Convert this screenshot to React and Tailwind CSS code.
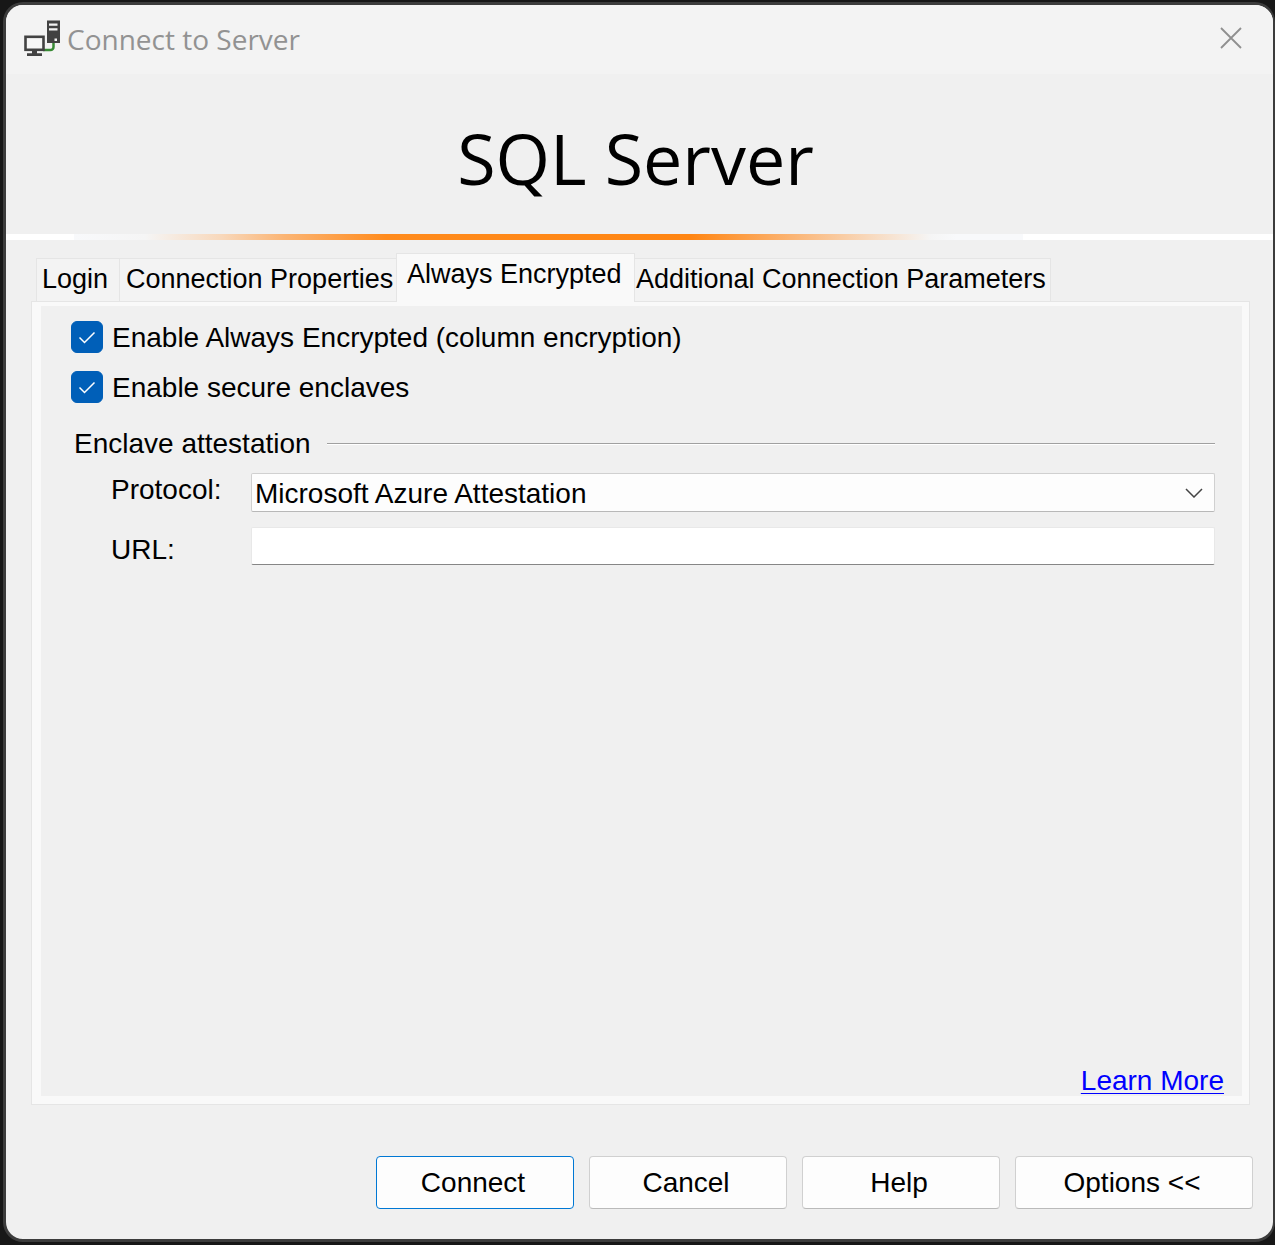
import { useState } from "react";

const TABS = [
  { name: "Login", className: "w-[84px] pl-[5px]" },
  { name: "Connection Properties", className: "w-[278px] pl-[6px]" },
  { name: "Always Encrypted", className: "w-[239px] pl-[10px]" },
  { name: "Additional Connection Parameters", className: "w-[417px] pl-[1px]" },
];

function ServerIcon() {
  return (
    <svg width="38" height="38" viewBox="0 0 38 38" fill="none" aria-hidden="true">
      <path d="M20 31h7.500a3 3 0 0 0 3-3v-5" stroke="#388a34" strokeWidth="2.500" />
      <rect x="24" y="1.500" width="13" height="22.500" fill="#424242" />
      <path d="M26 4.500h8.500v2.200H26zM26 9.300h8.500v2.200H26zM31.500 19.500h2.500v2.500h-2.500z" fill="#f3f3f3" />
      <rect x="2.500" y="17.800" width="18" height="13" stroke="#424242" strokeWidth="2.600" fill="#f6f6f6" />
      <path d="M9 31h5v3.300h5v2.700H4v-2.700h5z" fill="#424242" />
    </svg>
  );
}

function CheckOption({ id, label }) {
  return (
    <div className="flex h-8 items-center gap-[9px]">
      <span className="grid size-8 shrink-0">
        <input
          id={id}
          type="checkbox"
          defaultChecked
          className="peer col-start-1 row-start-1 size-8 appearance-none rounded-md border border-gray-500 bg-white checked:border-[#005fb8] checked:bg-[#005fb8]"
        />
        <svg
          viewBox="0 0 32 32"
          fill="none"
          aria-hidden="true"
          className="pointer-events-none invisible col-start-1 row-start-1 size-8 peer-checked:visible"
        >
          <path d="M8.500 16.500l5 5L23.500 11.500" stroke="#fff" strokeWidth="1.500" />
        </svg>
      </span>
      <label htmlFor={id} className="pt-[2px]">{label}</label>
    </div>
  );
}

function DialogButton({ children, className }) {
  return (
    <button type="button" className={`h-[53px] rounded border bg-[#fdfdfd] pr-1 ${className}`}>
      {children}
    </button>
  );
}

export default function App() {
  const [active, setActive] = useState("Always Encrypted");

  return (
    <div className="flex min-h-screen bg-[#171717] pt-[2px] pb-[3px] pl-[3px] font-['Liberation_Sans',Arial,sans-serif] text-[28px] leading-8 text-black">
      <main className="flex flex-1 flex-col overflow-hidden rounded-[20px] border-3 border-r-2 border-[#3c3c3c] bg-[#f0f0f0]">
        <header className="flex h-[69px] items-center bg-[#f3f3f3] pr-[31px] pl-[17px]">
          <span className="mb-1">
            <ServerIcon />
          </span>
          <span className="ml-[6px] flex-1 pb-[2px] font-['Open_Sans','Noto_Sans',sans-serif] text-[28px] text-[#929292]">
            Connect to Server
          </span>
          <button type="button" aria-label="Close" className="mb-[3px]">
            <svg width="22" height="22" viewBox="0 0 22 22" fill="none" aria-hidden="true">
              <path d="M1 1l20 20M21 1L1 21" stroke="#8f8f8f" strokeWidth="1.800" />
            </svg>
          </button>
        </header>

        <h1 className="flex h-40 items-center justify-center pt-2 pr-2 font-['Open_Sans','Noto_Sans',sans-serif] text-[70px] leading-none">
          SQL Server
        </h1>
        <div className="h-[6px] shrink-0 bg-[linear-gradient(to_right,#fff_5.4%,#f8f9fb_5.4%,#f5f5f5_11%,#f8d8bb_17%,#fbb473_22%,#ff8b1d_30%,#ff8512_54%,#fbb473_62%,#f8d8bb_68%,#f5f5f5_73%,#f8f9fb_75%,#f8f9fb_80.3%,#fff_80.3%)]" />

        <div role="tablist" className="mr-6 ml-[30px] flex h-[61px] items-end text-[27px]">
          {TABS.map((tab) => {
            const selected = tab.name === active;
            return (
              <button
                key={tab.name}
                type="button"
                role="tab"
                aria-selected={selected}
                onClick={() => setActive(tab.name)}
                className={`-mr-px border border-b-0 border-[#e5e5e5] text-left whitespace-nowrap ${tab.className} ${
                  selected ? "z-10 -mb-px h-[49px] bg-[#f9f9f9] pb-2" : "h-[43px] bg-[#f3f3f3] pb-[3px]"
                }`}
              >
                {tab.name}
              </button>
            );
          })}
        </div>

        <section
          role="tabpanel"
          aria-label={active}
          className="mr-[23px] ml-[25px] flex flex-1 flex-col border border-[#e5e5e5] bg-[#f9f9f9] pt-1 pr-[7px] pb-2 pl-[9px]"
        >
          <form className="flex flex-1 flex-col bg-[#f0f0f0] pt-[15px] pr-[18px] pl-[30px]">
            <div className="flex flex-col gap-[18px] pr-[9px]">
              <CheckOption id="always-encrypted" label="Enable Always Encrypted (column encryption)" />
              <CheckOption id="secure-enclaves" label="Enable secure enclaves" />
            </div>
            <fieldset className="mt-[25px] pr-[9px]">
              <legend className="flex w-full items-center gap-4 pl-[3px]">
                Enclave attestation
                <span className="h-[2px] flex-1 border-t border-[#a0a0a0] bg-white" />
              </legend>
              <div className="mt-[13px] grid grid-cols-[140px_1fr] gap-y-[15px] pl-10">
                <label htmlFor="protocol" className="pt-px">Protocol:</label>
                <span className="grid items-center">
                  <select
                    id="protocol"
                    className="col-start-1 row-start-1 h-[39px] w-full appearance-none rounded-xs border border-[#d0d0d0] border-b-[#b8b8b8] bg-[#fdfdfd] pt-[2px] pl-[3px]"
                  >
                    <option>Microsoft Azure Attestation</option>
                  </select>
                  <svg
                    width="18"
                    height="10"
                    viewBox="0 0 18 10"
                    fill="none"
                    aria-hidden="true"
                    className="pointer-events-none col-start-1 row-start-1 mr-3 justify-self-end"
                  >
                    <path d="M1 1l8 8 8-8" stroke="#444" strokeWidth="1.500" />
                  </svg>
                </span>
                <label htmlFor="url" className="pt-[7px]">URL:</label>
                <input
                  id="url"
                  type="text"
                  className="h-[38px] w-full rounded-xs border border-[#e8e8e8] border-b-[#868686] bg-white px-1"
                />
              </div>
            </fieldset>
            <a href="#learn-more" className="mt-auto -mb-px self-end text-[#0000ff] underline decoration-1 underline-offset-3">
              Learn More
            </a>
          </form>
        </section>

        <footer className="mt-[51px] mb-[30px] flex justify-end gap-[15px] pr-5">
          <DialogButton className="w-[198px] border-[#0078d4]">Connect</DialogButton>
          <DialogButton className="w-[198px] border-[#d0d0d0] border-b-[#bababa]">Cancel</DialogButton>
          <DialogButton className="w-[198px] border-[#d0d0d0] border-b-[#bababa]">Help</DialogButton>
          <DialogButton className="w-[238px] border-[#d0d0d0] border-b-[#bababa]">Options &lt;&lt;</DialogButton>
        </footer>
      </main>
    </div>
  );
}
